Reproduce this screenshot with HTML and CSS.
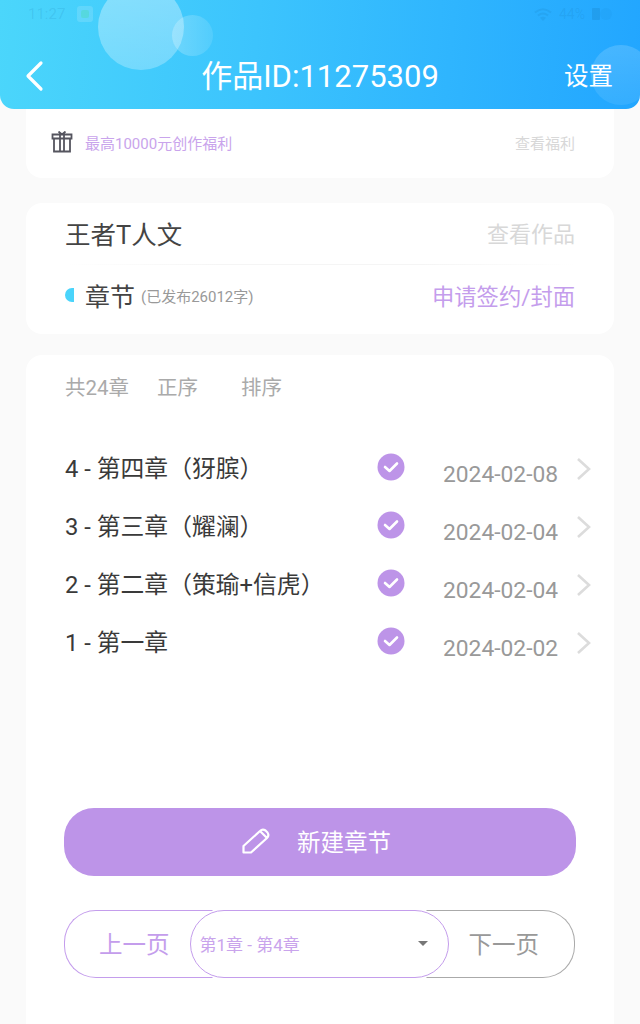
FILE: index.html
```html
<!DOCTYPE html>
<html lang="en">
<head>
  <meta charset="UTF-8" />
  <meta name="viewport" content="width=device-width, initial-scale=1.0"/>
  <title>作品设置</title>
  <link rel="stylesheet" href="styles.css">
</head>
<body>

  <header class="top-header">
    <span class="bubble bubble-big"></span>
    <span class="bubble bubble-small"></span>
    <span class="bubble bubble-right"></span>

    <div class="status-bar">
      <div class="status-left">
        <span>11:27</span>
        <span class="status-app"><span class="status-app-mark"></span></span>
      </div>
      <div class="status-right">
        <svg width="18" height="13" viewBox="0 0 18 13" fill="none" stroke="currentColor" stroke-width="2"><path d="M1 4.500 Q9 -2 17 4.500 M4 7.500 Q9 3.500 14 7.500"/><path d="M9 13 L6 9.800 Q9 7.800 12 9.800 Z" fill="currentColor" stroke="none"/></svg>
        <span>44%</span>
        <span class="status-battery"></span>
        <span class="status-charge"></span>
      </div>
    </div>

    <div class="title-row">
      <svg class="back-icon" width="20" height="32" viewBox="0 0 20 32"><path d="M17 3 L4 16 L17 29" fill="none" stroke="#fff" stroke-width="3.2" stroke-linecap="round" stroke-linejoin="round"/></svg>
      <h1>作品ID:11275309</h1>
      <a class="settings-link">设置</a>
    </div>
  </header>

  <section class="card welfare-card">
    <div class="welfare-left">
      <svg width="22" height="22" viewBox="0 0 22 22" fill="none" stroke="#55555f" stroke-width="1.8"><path d="M3 7.500 H19 V20.500 H3 Z M1.500 3.500 H20.500 V7.500 H1.500 Z M9 3.500 V20.500 M13 3.500 V20.500 M7.500 0.500 L11 3.500 L14.500 0.500"/></svg>
      <span>最高10000元创作福利</span>
    </div>
    <a class="welfare-link">查看福利</a>
  </section>

  <section class="card work-card">
    <div class="work-row">
      <span class="work-name">王者T人文</span>
      <a class="work-link">查看作品</a>
    </div>
    <div class="work-divider"></div>
    <div class="chapter-row">
      <div class="chapter-left">
        <span class="half-dot"></span>
        <span class="chapter-title">章节</span>
        <span class="chapter-count">(已发布26012字)</span>
      </div>
      <a class="sign-link">申请签约/封面</a>
    </div>
  </section>

  <section class="card list-card">
    <div class="list-tabs">
      <span>共24章</span>
      <span>正序</span>
      <span>排序</span>
    </div>

    <ul class="chapter-list">
      <li>
        <span class="chapter-name">4 - 第四章（犽膑）</span>
        <svg class="check" width="28" height="28" viewBox="0 0 28 28"><circle cx="14" cy="14" r="13.5" fill="#bd94e8"/><path d="M8 14 L12.5 18 L20 10.5" fill="none" stroke="#fff" stroke-width="2.6" stroke-linecap="round" stroke-linejoin="round"/></svg>
        <span class="chapter-date">2024-02-08</span>
        <svg class="chevron" width="16" height="24" viewBox="0 0 16 24"><path d="M2 2 L13 12 L2 22" fill="none" stroke="#dcdcdc" stroke-width="2.6"/></svg>
      </li>
      <li>
        <span class="chapter-name">3 - 第三章（耀澜）</span>
        <svg class="check" width="28" height="28" viewBox="0 0 28 28"><circle cx="14" cy="14" r="13.5" fill="#bd94e8"/><path d="M8 14 L12.5 18 L20 10.5" fill="none" stroke="#fff" stroke-width="2.6" stroke-linecap="round" stroke-linejoin="round"/></svg>
        <span class="chapter-date">2024-02-04</span>
        <svg class="chevron" width="16" height="24" viewBox="0 0 16 24"><path d="M2 2 L13 12 L2 22" fill="none" stroke="#dcdcdc" stroke-width="2.6"/></svg>
      </li>
      <li>
        <span class="chapter-name">2 - 第二章（策瑜+信虎）</span>
        <svg class="check" width="28" height="28" viewBox="0 0 28 28"><circle cx="14" cy="14" r="13.5" fill="#bd94e8"/><path d="M8 14 L12.5 18 L20 10.5" fill="none" stroke="#fff" stroke-width="2.6" stroke-linecap="round" stroke-linejoin="round"/></svg>
        <span class="chapter-date">2024-02-04</span>
        <svg class="chevron" width="16" height="24" viewBox="0 0 16 24"><path d="M2 2 L13 12 L2 22" fill="none" stroke="#dcdcdc" stroke-width="2.6"/></svg>
      </li>
      <li>
        <span class="chapter-name">1 - 第一章</span>
        <svg class="check" width="28" height="28" viewBox="0 0 28 28"><circle cx="14" cy="14" r="13.5" fill="#bd94e8"/><path d="M8 14 L12.5 18 L20 10.5" fill="none" stroke="#fff" stroke-width="2.6" stroke-linecap="round" stroke-linejoin="round"/></svg>
        <span class="chapter-date">2024-02-02</span>
        <svg class="chevron" width="16" height="24" viewBox="0 0 16 24"><path d="M2 2 L13 12 L2 22" fill="none" stroke="#dcdcdc" stroke-width="2.6"/></svg>
      </li>
    </ul>

    <button class="new-btn">
      <svg width="28" height="26" viewBox="0 0 28 26" fill="none" stroke="#fff" stroke-width="2.2" stroke-linejoin="round"><path d="M1.500 24.500 L1.500 18 L18 3 Q20.500 0.500 23.500 2.500 L25.500 4.500 Q27.500 7.500 25 10 L9 24.500 Z M18.500 3.500 L24.500 9.500"/></svg>
      <span>新建章节</span>
    </button>

    <div class="pager">
      <a class="pager-prev">上一页</a>
      <div class="pager-select">
        <span>第1章 - 第4章</span>
        <span class="caret"></span>
      </div>
      <a class="pager-next">下一页</a>
    </div>
  </section>

</body>
</html>
```

FILE: styles.css
```css
* {
  box-sizing: border-box;
}

html, body {
  height: 1024px;
  overflow: hidden;
}

body {
  font-family: Roboto, "Noto Sans CJK SC", sans-serif;
  background: #fafafa;
  margin: 0;
  color: #333;
}

.top-header {
  position: relative;
  height: 109px;
  overflow: hidden;
  border-radius: 0 0 14px 14px;
  background: linear-gradient(95deg, #4bd6fb 0%, #3cc4fd 40%, #22a6ff 100%);
}

.bubble {
  position: absolute;
  border-radius: 50%;
}

.bubble-big {
  left: 98px;
  top: -16px;
  width: 86px;
  height: 86px;
  background: linear-gradient(180deg, rgba(255,255,255,0.36), rgba(255,255,255,0.26));
}

.bubble-small {
  left: 172px;
  top: 15px;
  width: 41px;
  height: 41px;
  background: linear-gradient(90deg, rgba(255,255,255,0.24), rgba(255,255,255,0.1));
}

.bubble-right {
  left: 591px;
  top: 45px;
  width: 60px;
  height: 60px;
  background: linear-gradient(180deg, rgba(255,255,255,0.16), rgba(255,255,255,0.08));
}

.status-bar {
  position: relative;
  height: 28px;
  padding: 0 28px;
  display: flex;
  justify-content: space-between;
  align-items: center;
  font-size: 15px;
  color: rgba(20,110,170,0.14);
}

.status-left, .status-right {
  display: flex;
  align-items: center;
  gap: 12px;
}

.status-right {
  font-size: 14px;
  gap: 7px;
}

.status-app {
  width: 16px;
  height: 16px;
  padding: 4px;
  border-radius: 3px;
  background: rgba(255,255,255,0.14);
}

.status-app-mark {
  display: block;
  width: 8px;
  height: 8px;
  border-radius: 2px;
  background: rgba(70,220,170,0.35);
}

.status-battery {
  width: 8px;
  height: 12px;
  border-radius: 1px;
  background: rgba(20,110,170,0.2);
}

.status-charge {
  width: 12px;
  height: 12px;
  margin-left: -7px;
  border-radius: 50%;
  background: rgba(20,110,170,0.06);
}

.title-row {
  position: relative;
  height: 81px;
  padding: 11px 27px 0 24px;
  display: grid;
  grid-template-columns: 1fr auto 1fr;
  align-items: center;
  color: white;
}

.back-icon {
  margin-top: 4px;
}

.title-row h1 {
  margin: -2px 0 0 3px;
  font-size: 31px;
  font-weight: 400;
}

.settings-link {
  justify-self: end;
  font-size: 24.500px;
}

.card {
  background: #fff;
  margin: 0 26px;
  border-radius: 16px;
}

.welfare-card {
  height: 69px;
  border-radius: 0 0 16px 16px;
  padding: 0 39px 3px 25px;
  display: flex;
  justify-content: space-between;
  align-items: center;
}

.welfare-left {
  display: flex;
  align-items: center;
  gap: 12px;
  font-size: 15px;
  color: #c9a4ec;
}

.welfare-link {
  font-size: 15px;
  color: #d8d8d8;
}

.work-card {
  height: 131px;
  margin-top: 25px;
  padding: 0 39px 0 40px;
}

.work-row {
  height: 61px;
  padding-bottom: 2px;
  display: flex;
  justify-content: space-between;
  align-items: center;
}

.work-name {
  margin-left: -1px;
  font-size: 25.500px;
  color: #444;
}

.work-link {
  margin-top: -2px;
  font-size: 22px;
  color: #d8d8d8;
}

.work-divider {
  height: 1px;
  background: linear-gradient(90deg, #fff, #f5f5f5 30%, #f5f5f5 70%, #fff);
}

.chapter-row {
  height: 63px;
  padding-bottom: 4px;
  margin-left: -1px;
  display: flex;
  justify-content: space-between;
  align-items: center;
}

.chapter-left {
  display: flex;
  align-items: center;
}

.half-dot {
  width: 9px;
  height: 14px;
  margin-right: 11px;
  border-radius: 9px 0 0 9px;
  background: #4ad4fb;
}

.chapter-title {
  font-size: 25px;
  color: #444;
}

.chapter-count {
  margin: 2px 0 0 6px;
  font-size: 15px;
  color: #999;
}

.sign-link {
  font-size: 22.300px;
  color: #c49dec;
}

.list-card {
  height: 720px;
  margin-top: 21px;
  padding: 0 38px;
}

.list-tabs {
  height: 62px;
  padding-left: 1px;
  display: flex;
  align-items: center;
  font-size: 20.500px;
  color: #aaa;
}

.list-tabs span {
  margin-right: 28px;
}

.list-tabs span + span {
  margin-right: 43px;
}

.chapter-list {
  list-style: none;
  margin: 22px 0 0;
  padding: 0 0 0 2px;
  height: 369px;
}

.chapter-list li {
  height: 58px;
  display: flex;
  align-items: center;
}

.chapter-name {
  flex: 1;
  margin: -3px 0 0 -1px;
  font-size: 23.800px;
  color: #3a3a3a;
}

.check {
  margin-top: -2px;
  margin-right: 38px;
}

.chapter-date {
  width: 114px;
  margin-top: 13px;
  font-size: 22.800px;
  color: #999;
  white-space: nowrap;
}

.chevron {
  margin: 2px -16px 0 19px;
}

.new-btn {
  width: 512px;
  height: 68px;
  padding: 0 7px 3px 0;
  border: none;
  border-radius: 30px;
  background: #bd94e8;
  color: white;
  font-family: inherit;
  font-size: 23.500px;
  display: flex;
  justify-content: center;
  align-items: center;
  gap: 27px;
}

.pager {
  margin-top: 34px;
  width: 511px;
  height: 68px;
  display: flex;
  font-size: 23.500px;
}

.pager-prev, .pager-next {
  flex: 1;
  display: flex;
  align-items: center;
  padding-bottom: 2px;
  border: 1px solid;
}

.pager-prev {
  padding-left: 34px;
  border-color: #c49dec #0000 #c49dec #c49dec;
  border-radius: 32px 0 0 32px;
  color: #c49dec;
}

.pager-next {
  justify-content: flex-end;
  padding-right: 35px;
  border-color: #aaa #aaa #aaa #0000;
  border-radius: 0 32px 32px 0;
  color: #999;
}

.pager-select {
  position: relative;
  flex: none;
  width: 259px;
  margin: 0 -23px;
  padding: 0 20px 2px 9px;
  display: flex;
  justify-content: space-between;
  align-items: center;
  border: 1px solid #c49dec;
  border-radius: 34px;
  background: #fff;
  font-size: 17px;
  color: #c9a4ec;
}

.caret {
  width: 0;
  height: 0;
  border-left: 5px solid transparent;
  border-right: 5px solid transparent;
  border-top: 5px solid #777;
}
```
